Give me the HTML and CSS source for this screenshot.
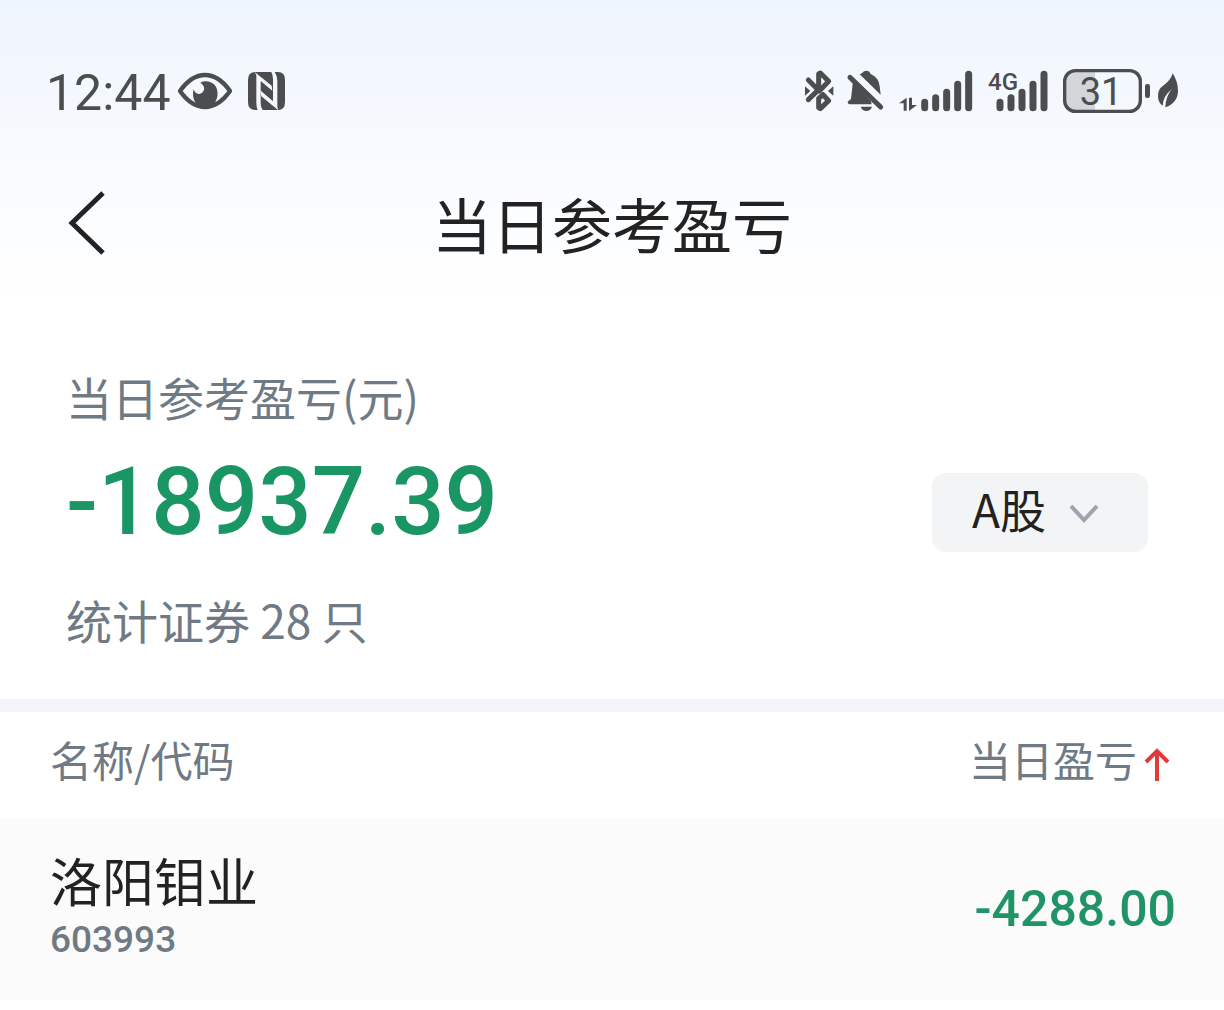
FILE: index.html
```html
<!DOCTYPE html>
<html lang="zh-CN">
<head>
<meta charset="utf-8">
<meta name="viewport" content="width=device-width, initial-scale=1">
<title>当日参考盈亏</title>
<link rel="stylesheet" href="styles.css">
</head>
<body>
<div class="top">
  <div class="status">
    <div class="status-left">
      <span class="clock">12:44</span>
      <svg class="icon" width="54" height="44" viewBox="444 42 162 132" aria-hidden="true">
        <path d="M450 108 Q484 60 525 60 Q566 60 600 108 Q566 156 525 156 Q484 156 450 108Z" fill="none" stroke="currentColor" stroke-width="13" stroke-linejoin="round"/>
        <path d="M511 83 C526 75 546 79 556 92 C568 110 563 138 548 151 Q525 162 503 151 C491 140 486 121 491 103 C495 116 506 120 515 114 C526 106 525 92 511 83Z" fill="currentColor"/>
      </svg>
      <svg class="icon nfc" width="38" height="44" viewBox="654 42 114 132" aria-hidden="true">
        <path d="M676 51 H744 Q765 51 765 74 V141 Q765 165 744 165 H676 Q654 165 654 141 V74 Q654 51 676 51Z" fill="currentColor"/>
        <path d="M674 51 L725 92 L727 107 L692 78 V145 Q692 157 698 165 H683 Q679 155 679 143 V61Z M744 165 L694 124 L692 107 L729 139 V72 Q729 60 724 51 H734 Q742 62 742 78 V154Z" fill="#f4f8fe"/>
      </svg>
    </div>
    <div class="status-right">
      <svg class="icon" width="30" height="44" viewBox="45 42 90 132" aria-hidden="true">
        <g fill="none" stroke="currentColor" stroke-width="15" stroke-linecap="round" stroke-linejoin="round">
          <path d="M55 75 L88 108 L116 79 Q103 66 91 54 L86 57 V101"/>
          <path d="M55 134 L86 104 M99 119 L116 137 L91 161 L86 158 V130 L99 119"/>
        </g>
        <path d="M45 94 L61 108 L45 122Z M130 94 L114 108 L130 122Z" fill="currentColor"/>
      </svg>
      <svg class="icon bell" width="38" height="44" viewBox="170 42 114 132" aria-hidden="true">
        <path d="M208 58 Q216 55 219 50 Q228 44 237 50 L241 57 Q266 68 268 94 L271 119Z" fill="currentColor"/>
        <path d="M188 78 L242 139 L244 148 H178 Q171 147 172 140 L182 132Z M211 155 H245 Q240 168 228 168 Q216 168 211 155Z" fill="currentColor"/>
        <path d="M179 67 L271 156" stroke="currentColor" stroke-width="15" stroke-linecap="round"/>
      </svg>
      <svg class="icon signal" width="74" height="44" viewBox="327 42 222 132" aria-hidden="true">
        <path d="M350 128 V167 H341 V145 H327Z M357 128 H366 V150 H381 L357 168Z" fill="currentColor"/>
        <path d="M404 142V158M437 128V158M470 112V158M503 88V158M536 58V158" stroke="currentColor" stroke-width="21" stroke-linecap="round"/>
      </svg>
      <svg class="icon" width="60" height="44" viewBox="23 42 180 132" role="img" aria-label="4G">
        <text class="network" x="23" y="106">4G</text>
        <path d="M59 142V158M92 128V158M125 112V158M158 88V158M191 58V158" stroke="currentColor" stroke-width="21" stroke-linecap="round"/>
      </svg>
      <svg class="icon battery" width="116" height="44" viewBox="249 42 348 132" role="img" aria-label="31%">
        <path d="M345 46 H285 Q253 46 253 78 V138 Q253 170 285 170 H345Z" fill="#d2d5da"/>
        <rect x="254" y="47" width="227" height="122" rx="32" fill="none" stroke="currentColor" stroke-width="10"/>
        <text class="charge" x="363" y="149" text-anchor="middle">31</text>
        <rect x="495" y="87" width="15" height="42" rx="7" fill="currentColor"/>
        <path d="M578 55 Q594 80 594 108 Q593 144 556 157 Q557 125 575 103 Q549 124 548 152 Q534 143 534 124 Q533 103 549 92 Q572 77 578 55Z" fill="currentColor"/>
      </svg>
    </div>
  </div>
  <header class="nav">
    <button class="back" type="button" aria-label="返回">
      <svg width="38" height="66" viewBox="0 0 38 66" aria-hidden="true"><path d="M35 3 L4 33 L35 63" fill="none" stroke="currentColor" stroke-width="5"/></svg>
    </button>
    <h1 class="title">当日参考盈亏</h1>
  </header>
</div>
<main>
  <section class="summary">
    <div class="figures">
      <p class="label">当日参考盈亏(元)</p>
      <p class="total">-18937.39</p>
      <p class="label">统计证券 28 只</p>
    </div>
    <div class="market">
      <select class="market-select" aria-label="市场"><option>A股</option></select>
      <svg class="chevron" width="30" height="20" viewBox="0 0 30 20" aria-hidden="true"><path d="M2 2 L15 16 L28 2" fill="none" stroke="currentColor" stroke-width="4"/></svg>
    </div>
  </section>
  <table class="holdings">
    <thead>
      <tr>
        <th scope="col">名称/代码</th>
        <th scope="col" class="amount"><button class="sort" type="button">当日盈亏<svg class="arrow" width="26" height="34" viewBox="0 0 26 34" aria-hidden="true"><path d="M13 33 V3 M2 14 L13 3 L24 14" fill="none" stroke="currentColor" stroke-width="4"/></svg></button></th>
      </tr>
    </thead>
    <tbody>
      <tr>
        <td class="stock"><div class="name">洛阳钼业</div><div class="code">603993</div></td>
        <td class="amount loss">-4288.00</td>
      </tr>
    </tbody>
  </table>
</main>
</body>
</html>
```

FILE: styles.css
```css
* { box-sizing: border-box; }

body {
  margin: 0;
  background: #fff;
  color: #222;
  font-family: "Noto Sans CJK SC", sans-serif;
}

h1, p { margin: 0; }

button, select {
  margin: 0;
  padding: 0;
  border: 0;
  background: none;
  color: inherit;
  font: inherit;
}

svg { display: block; flex: none; }

.icon { overflow: visible; }

.top {
  padding-bottom: 32px;
  background: linear-gradient(#eff5fe, #fff);
}

.status {
  display: flex;
  justify-content: space-between;
  padding: 69px 45px 0 46px;
  color: #4b4d4f;
}

.status-left, .status-right { display: flex; }

.clock {
  width: 132px;
  font: 50px/48px Roboto, sans-serif;
}

.nfc { margin-left: 16px; }
.bell { margin-left: 12px; }
.signal { margin: 0 15px 0 14px; }
.battery { margin-left: 15px; }

.network {
  font: 500 72px Roboto, sans-serif;
  fill: currentColor;
}

.charge {
  font: 114px Roboto, sans-serif;
  fill: currentColor;
}

.nav {
  display: grid;
  grid-template-columns: 60px 1fr 60px;
  align-items: center;
  margin-top: 62px;
  padding: 0 66px;
}

.back { justify-self: start; padding-left: 2px; }

.title {
  font-size: 60px;
  font-weight: 400;
  line-height: 88px;
  text-align: center;
}

.summary {
  display: flex;
  align-items: center;
  justify-content: space-between;
  padding: 63px 76px 46px 66px;
  border-bottom: 13px solid #f4f5fa;
}

.label {
  color: #6f7a84;
  font-size: 46px;
  line-height: 68px;
}

.total {
  padding: 12px 0 23px;
  color: #1a9664;
  font: 500 94px/120px Roboto, sans-serif;
}

.market { position: relative; margin-top: 10px; }

.market-select {
  width: 216px;
  height: 79px;
  padding: 0 40px 10px;
  border-radius: 14px;
  background: #f3f4f6;
  font-size: 46px;
  appearance: none;
}

.chevron {
  position: absolute;
  top: 31px;
  right: 49px;
  color: #9ca5ad;
  pointer-events: none;
}

.holdings {
  width: 100%;
  border-collapse: collapse;
}

th {
  height: 106px;
  padding: 0 50px 12px;
  color: #6f7a84;
  font-size: 42px;
  font-weight: 400;
  line-height: 62px;
  text-align: left;
}

td {
  height: 182px;
  padding: 0 50px;
  background: #fbfbfb;
}

.amount { padding-right: 48px; text-align: right; }

.sort {
  display: inline-flex;
  align-items: center;
  gap: 7px;
  margin-right: 6px;
  vertical-align: top;
}

.arrow { margin-top: 12px; color: #e03a3a; }

.stock { padding-bottom: 10px; }

.name { font-size: 52px; line-height: 72px; }

.code {
  color: #6f7a84;
  font: 500 37px/48px Roboto, sans-serif;
}

.loss {
  color: #219467;
  font: 500 50px/60px Roboto, sans-serif;
}
```
